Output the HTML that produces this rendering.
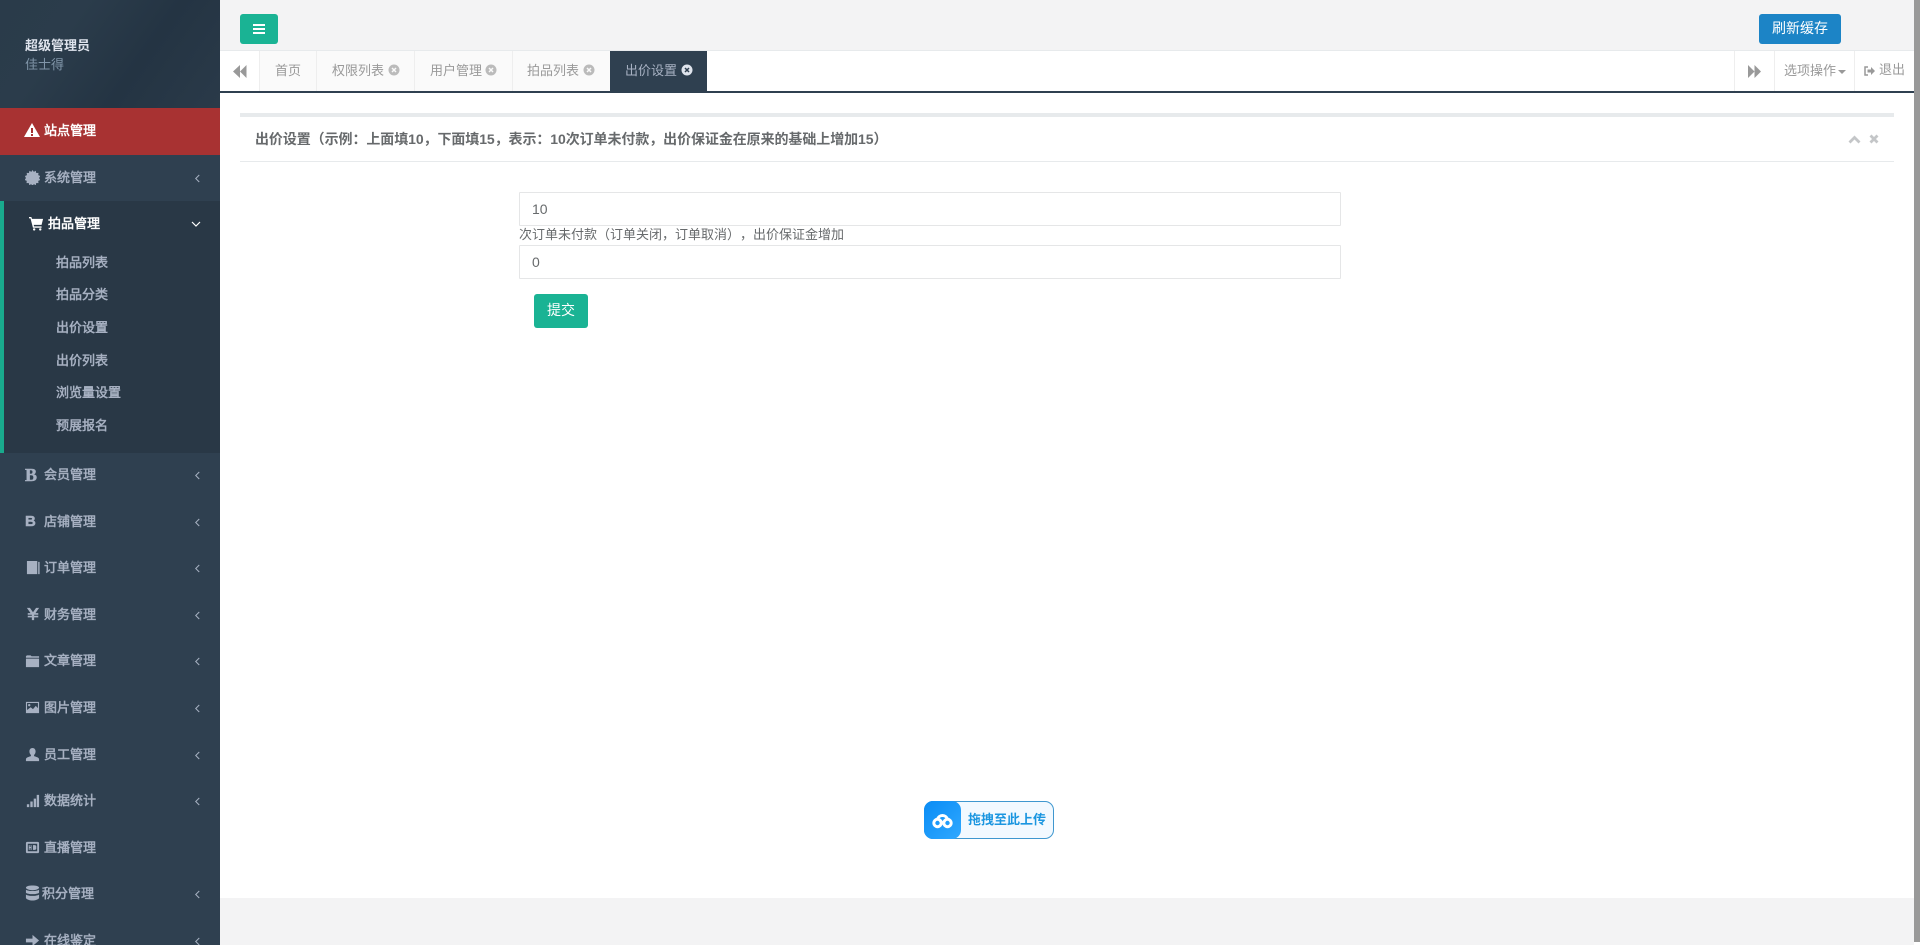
<!DOCTYPE html>
<html lang="zh"><head><meta charset="utf-8"><title>出价设置</title>
<style>
*{box-sizing:border-box}
html,body{margin:0;padding:0;width:1920px;height:945px;overflow:hidden;background:#fff;font-family:"Liberation Sans","Noto Sans CJK SC",sans-serif;font-size:13px;color:#676a6c;text-spacing-trim:space-all}
.a{position:absolute;white-space:nowrap}
#side{left:0;top:0;width:220px;height:945px;background:#2f4050;overflow:hidden}
#prof{left:0;top:0;width:220px;height:108px;background:linear-gradient(125deg,#2a3b4a 0%,#2b3c4b 30%,#243443 62%,#2a3a49 100%)}
.m{left:0;width:220px;height:46px;line-height:46px;color:#a7b1c2;font-weight:400;-webkit-text-stroke:.5px}
.m .t{position:absolute;left:44px;top:0}
.m svg.i{position:absolute;left:25px;top:15px;width:15px;height:15px;fill:#a7b1c2;-webkit-text-stroke:0}
.m svg.c{position:absolute;left:194px;top:18px;width:7px;height:11px;fill:none;stroke:#a7b1c2;stroke-width:1.2}
.s{left:56px;color:#a7b1c2;line-height:18px;font-weight:400;-webkit-text-stroke:.5px}
.tab{top:51px;height:40px;line-height:39px;color:#999;border-left:1px solid #eee;background:#fafafa;padding-left:15px}
.tab svg{position:absolute;top:13px;width:12px;height:12px}
input{position:absolute;left:519px;width:822px;height:34px;border:1px solid #e5e6e7;padding:0 12px;font:14px "Liberation Sans",sans-serif;color:#676a6c;background:#fff;border-radius:1px;outline:0}
</style></head><body>

<div class="a" id="side">
<div class="a" id="prof"></div>
<div class="a" style="left:25px;top:37px;color:#dfe4ed;font-weight:700;line-height:18px">超级管理员</div>
<div class="a" style="left:25px;top:56px;color:#8095a8;line-height:18px">佳士得</div>

<div class="a" style="left:0;top:108px;width:220px;height:47px;background:#a83232"></div>
<div class="a m" style="top:108px;color:#fff;height:47px;line-height:46px"><svg class="i" viewBox="0 0 16 16" style="left:24px;top:14px;width:16px;height:16px;fill:#fff"><path d="M8 1L16 15H0ZM7 6v5h2V6ZM7 12v2h2v-2Z" fill-rule="evenodd"/></svg><span class="t">站点管理</span></div>

<div class="a m" style="top:155px"><svg class="i" viewBox="0 0 16 16"><path d="M8 0l1.400 2 2.100-1.200.5 2.400 2.400-.2-.3 2.400 2.200 1-1.300 2.100 1.300 2.100-2.200 1 .3 2.400-2.400-.2-.5 2.400-2.100-1.200L8 17l-1.400-2-2.100 1.200-.5-2.400-2.400.2.300-2.400-2.200-1 1.300-2.100L-.100 6.400l2.200-1-.3-2.400 2.400.2.500-2.400 2.100 1.200Z"/></svg><span class="t">系统管理</span><svg class="c" viewBox="0 0 8 12"><path d="M6 2L2 6l4 4"/></svg></div>

<div class="a" style="left:0;top:201px;width:220px;height:252px;background:#293846;border-left:4px solid #19aa8d"></div>
<div class="a m" style="top:201px;color:#fff"><svg class="i" viewBox="0 0 16 16" style="left:29px;fill:#fff"><path d="M0 1h2.500l.7 2H15l-1.600 6.500H5l.4 1.500h8v1.500H4.200L1.600 2.500H0ZM5.500 13a1.300 1.300 0 1 1 0 2.600 1.300 1.300 0 0 1 0-2.600ZM12 13a1.300 1.300 0 1 1 0 2.600A1.300 1.300 0 0 1 12 13Z"/></svg><span class="t" style="left:48px">拍品管理</span><svg class="c" viewBox="0 0 12 8" style="left:190px;top:19px;width:12px;height:8px;stroke:#fff"><path d="M2 2l4 4 4-4"/></svg></div>
<div class="a s" style="top:254px">拍品列表</div>
<div class="a s" style="top:286px">拍品分类</div>
<div class="a s" style="top:319px">出价设置</div>
<div class="a s" style="top:352px">出价列表</div>
<div class="a s" style="top:384px">浏览量设置</div>
<div class="a s" style="top:417px">预展报名</div>

<div class="a m" style="top:452px"><span class="a" style="left:25px;top:0;font:bold 18px 'Liberation Serif',serif;line-height:46px">B</span><span class="t">会员管理</span><svg class="c" viewBox="0 0 8 12"><path d="M6 2L2 6l4 4"/></svg></div>
<div class="a m" style="top:499px"><span class="a" style="left:25px;top:0;font:bold 15px 'Liberation Sans',sans-serif;line-height:46px">B</span><span class="t">店铺管理</span><svg class="c" viewBox="0 0 8 12"><path d="M6 2L2 6l4 4"/></svg></div>
<div class="a m" style="top:545px"><svg class="i" viewBox="0 0 16 16" style="left:26px"><path d="M1 1h11v14H1ZM13 2h1.500v13H13Z"/></svg><span class="t">订单管理</span><svg class="c" viewBox="0 0 8 12"><path d="M6 2L2 6l4 4"/></svg></div>
<div class="a m" style="top:592px"><svg class="i" viewBox="0 0 16 16" style="left:26px;width:14px;height:14px"><path d="M1 1h3.500L8 6l3.500-5H15l-4.200 6H14v1.800H9.300V10H14v1.800H9.300V15H6.700v-3.200H2V10h4.700V8.800H2V7h3.200Z"/></svg><span class="t">财务管理</span><svg class="c" viewBox="0 0 8 12"><path d="M6 2L2 6l4 4"/></svg></div>
<div class="a m" style="top:638px"><svg class="i" viewBox="0 0 16 16"><path d="M1 5V3.500L2 2.500h4l1 1h8V5ZM1 6h14v9H1Z"/></svg><span class="t">文章管理</span><svg class="c" viewBox="0 0 8 12"><path d="M6 2L2 6l4 4"/></svg></div>
<div class="a m" style="top:685px"><svg class="i" viewBox="0 0 16 16" style="top:15px"><path d="M1 2h14v12H1ZM2.200 3.200v7.500l3.800-3 2.500 2 3-3.500 2.300 2.500V3.200ZM4.500 4.200a1.300 1.300 0 1 1 0 2.600 1.300 1.300 0 0 1 0-2.600Z" fill-rule="evenodd"/></svg><span class="t">图片管理</span><svg class="c" viewBox="0 0 8 12"><path d="M6 2L2 6l4 4"/></svg></div>
<div class="a m" style="top:732px"><svg class="i" viewBox="0 0 16 16"><path d="M8 1c2 0 3.300 1.500 3.300 3.700 0 1.600-.7 3-1.600 3.800v1.200c2 .7 5.300 1.500 5.300 3.300V15H1v-2c0-1.800 3.300-2.600 5.300-3.300V8.500C5.400 7.700 4.700 6.300 4.700 4.700 4.700 2.500 6 1 8 1Z"/></svg><span class="t">员工管理</span><svg class="c" viewBox="0 0 8 12"><path d="M6 2L2 6l4 4"/></svg></div>
<div class="a m" style="top:778px"><svg class="i" viewBox="0 0 16 16"><path d="M2 12h2.500v3H2ZM5.700 9h2.500v6H5.700ZM9.300 6h2.500v9H9.300ZM12.500 2h2.500v13h-2.500Z"/></svg><span class="t">数据统计</span><svg class="c" viewBox="0 0 8 12"><path d="M6 2L2 6l4 4"/></svg></div>
<div class="a m" style="top:825px"><svg class="i" viewBox="0 0 16 16"><path d="M2.500 2h11A1.500 1.500 0 0 1 15 3.500v9a1.500 1.500 0 0 1-1.500 1.500h-11A1.500 1.500 0 0 1 1 12.500v-9A1.500 1.500 0 0 1 2.500 2ZM3 4v8h10V4ZM4 5.500h1v2h1v-2h1v5H6v-2H5v2H4ZM8.500 5.500h2.500l1 1v3l-1 1H8.500Z" fill-rule="evenodd"/></svg><span class="t">直播管理</span></div>
<div class="a m" style="top:871px"><svg class="i" viewBox="0 0 16 16" style="top:14px;height:16px"><path d="M8 0c3.500 0 7 .8 7 2.300S11.500 5 8 5 1 3.800 1 2.300 4.500 0 8 0ZM1 4.400C3 6.400 13 6.400 15 4.400v3.300C13 9.700 3 9.700 1 7.700ZM1 9.600c2 2 12 2 14 0v3.700C14.500 14.800 11 16 8 16s-6.500-1.200-7-2.700Z"/></svg><span class="t" style="left:42px">积分管理</span><svg class="c" viewBox="0 0 8 12"><path d="M6 2L2 6l4 4"/></svg></div>
<div class="a m" style="top:918px"><svg class="i" viewBox="0 0 16 16"><path d="M1 6h7V2l7 6-7 6v-4H1Z"/></svg><span class="t">在线鉴定</span><svg class="c" viewBox="0 0 8 12"><path d="M6 2L2 6l4 4"/></svg></div>
</div>

<!-- top -->
<div class="a" style="left:220px;top:0;width:1694px;height:51px;background:#f3f3f4"></div>
<div class="a" style="left:240px;top:14px;width:38px;height:30px;background:#1ab394;border-radius:3px"></div>
<div class="a" style="left:253px;top:24px;width:12px;height:2px;background:#fff;box-shadow:0 4px 0 #fff,0 8px 0 #fff"></div>
<div class="a" style="left:1759px;top:14px;width:82px;height:30px;background:#1c84c6;border-radius:3px;color:#fff;text-align:center;line-height:29px;font-size:14px">刷新缓存</div>

<!-- tabs -->
<div class="a" style="left:220px;top:50px;width:1694px;height:1px;background:#e7eaec"></div>
<div class="a" style="left:220px;top:51px;width:1694px;height:40px;background:#fff"></div>
<div class="a" style="left:220px;top:91px;width:1694px;height:2px;background:#2f4050"></div>
<svg class="a" style="left:233px;top:65px;width:14px;height:13px" viewBox="0 0 14 13" fill="#999"><path d="M7 0v13L0 6.500ZM13.500 0v13L7 6.500Z"/></svg>
<div class="a tab" style="left:259px;width:57px">首页</div>
<div class="a tab" style="left:316px;width:98px">权限列表<svg style="left:71px" viewBox="0 0 12 12"><circle cx="6" cy="6" r="5.500" fill="#bbb"/><path d="M4 4l4 4M8 4l-4 4" stroke="#fafafa" stroke-width="1.500"/></svg></div>
<div class="a tab" style="left:414px;width:98px">用户管理<svg style="left:70px" viewBox="0 0 12 12"><circle cx="6" cy="6" r="5.500" fill="#bbb"/><path d="M4 4l4 4M8 4l-4 4" stroke="#fafafa" stroke-width="1.500"/></svg></div>
<div class="a tab" style="left:512px;padding-left:14px;width:98px">拍品列表<svg style="left:70px" viewBox="0 0 12 12"><circle cx="6" cy="6" r="5.500" fill="#bbb"/><path d="M4 4l4 4M8 4l-4 4" stroke="#fafafa" stroke-width="1.500"/></svg></div>
<div class="a tab" style="left:610px;width:97px;background:#2f4050;border:0;color:#a7b1c2;padding-left:15px">出价设置<svg style="left:71px" viewBox="0 0 12 12"><circle cx="6" cy="6" r="5.500" fill="#dfe4ed"/><path d="M4 4l4 4M8 4l-4 4" stroke="#2f4050" stroke-width="1.500"/></svg></div>
<div class="a" style="left:1734px;top:51px;width:1px;height:40px;background:#eee"></div>
<div class="a" style="left:1774px;top:51px;width:1px;height:40px;background:#eee"></div>
<div class="a" style="left:1854px;top:51px;width:1px;height:40px;background:#eee"></div>
<svg class="a" style="left:1748px;top:65px;width:13px;height:13px" viewBox="0 0 13 13" fill="#999"><path d="M0 0v13l6.500-6.500ZM6.500 0v13L13 6.500Z"/></svg>
<div class="a" style="left:1784px;top:61px;color:#999;line-height:20px">选项操作</div>
<div class="a" style="left:1838px;top:70px;width:0;height:0;border:4px solid transparent;border-top:4px solid #999"></div>
<svg class="a" style="left:1863px;top:65px;width:12px;height:12px" viewBox="0 0 12 12"><path d="M5 2H2v8h3" fill="none" stroke="#999" stroke-width="1.500"/><path d="M4.500 4.500H8V2l4 4-4 4V7.500H4.500Z" fill="#999"/></svg>
<div class="a" style="left:1879px;top:60px;color:#999;line-height:20px">退出</div>

<!-- panel -->
<div class="a" style="left:240px;top:113px;width:1654px;height:4px;background:#e7eaec"></div>
<div class="a" style="left:240px;top:161px;width:1654px;height:1px;background:#e7eaec"></div>
<div class="a" style="left:255px;top:130px;font-weight:700;font-size:14px;letter-spacing:-.08px;line-height:18px;color:#676a6c">出价设置（示例：上面填10，下面填15，表示：10次订单未付款，出价保证金在原来的基础上增加15）</div>
<svg class="a" style="left:1848px;top:135px;width:13px;height:9px" viewBox="0 0 13 9"><path d="M1.500 7.500L6.500 2.500l5 5" fill="none" stroke="#c4c6c8" stroke-width="2.800"/></svg>
<svg class="a" style="left:1869px;top:134px;width:10px;height:10px" viewBox="0 0 10 10"><path d="M1.500 1.500l7 7M8.500 1.500l-7 7" fill="none" stroke="#c4c6c8" stroke-width="2.800"/></svg>

<!-- form -->
<input style="top:192px" value="10">
<div class="a" style="left:519px;top:226px;line-height:18px">次订单未付款（订单关闭，订单取消），出价保证金增加</div>
<input style="top:245px" value="0">
<div class="a" style="left:534px;top:294px;width:54px;height:34px;background:#1ab394;border-radius:3px;color:#fff;text-align:center;line-height:33px;font-size:14px">提交</div>

<!-- upload -->
<div class="a" style="left:924px;top:801px;width:130px;height:38px;border:1px solid #3f97cf;border-radius:9px;background:#f2f9ff"></div>
<div class="a" style="left:924px;top:801px;width:37px;height:38px;border-radius:9px;background:linear-gradient(135deg,#0a8cf5,#2fa8ff)"></div>
<svg class="a" style="left:932px;top:811px;width:21px;height:18px" viewBox="0 0 21 18"><g fill="none" stroke="#fff" stroke-width="3"><circle cx="5.500" cy="12" r="3.700"/><circle cx="15.500" cy="12" r="3.700"/><path d="M5.500 8.300A5.200 5.200 0 0 1 15.500 8.300M7.500 8.500L11 13"/></g></svg>
<div class="a" style="left:968px;top:811px;color:#1b96e0;font-weight:700;line-height:18px">拖拽至此上传</div>

<!-- footer / scrollbar -->
<div class="a" style="left:220px;top:898px;width:1694px;height:47px;background:#f3f3f4"></div>
<div class="a" style="left:1914px;top:0;width:6px;height:942px;background:#999"></div>
</body></html>
